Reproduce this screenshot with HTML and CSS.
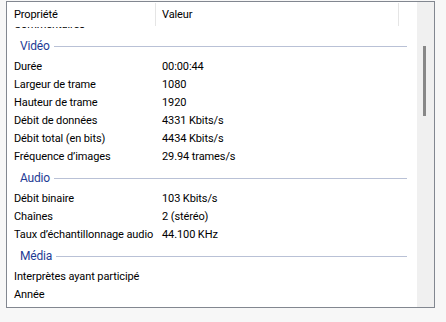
FILE: index.html
```html
<!DOCTYPE html>
<html lang="fr">
<head>
    <meta charset="UTF-8">
    <title>Propriétés - Détails</title>
    <link rel="stylesheet" href="styles.css">
</head>
<body>
    <div class="panel">
        <div class="list">
            <div class="head">
                <div class="head-cell col-name">Propriété</div>
                <div class="head-cell col-value">Valeur</div>
                <div class="head-cell col-rest"></div>
            </div>

            <div class="rows">
                <div class="row clipped"><span class="name">Commentaires</span></div>

                <div class="group"><span>Vidéo</span></div>
                <div class="row"><span class="name">Durée</span><span class="value">00:00:44</span></div>
                <div class="row"><span class="name">Largeur de trame</span><span class="value">1080</span></div>
                <div class="row"><span class="name">Hauteur de trame</span><span class="value">1920</span></div>
                <div class="row"><span class="name">Débit de données</span><span class="value">4331 Kbits/s</span></div>
                <div class="row"><span class="name">Débit total (en bits)</span><span class="value">4434 Kbits/s</span></div>
                <div class="row"><span class="name">Fréquence d’images</span><span class="value">29.94 trames/s</span></div>

                <div class="group"><span>Audio</span></div>
                <div class="row"><span class="name">Débit binaire</span><span class="value">103 Kbits/s</span></div>
                <div class="row"><span class="name">Chaînes</span><span class="value">2 (stéréo)</span></div>
                <div class="row"><span class="name">Taux d’échantillonnage audio</span><span class="value">44.100 KHz</span></div>

                <div class="group"><span>Média</span></div>
                <div class="row"><span class="name">Interprètes ayant participé</span><span class="value"></span></div>
                <div class="row"><span class="name">Année</span><span class="value"></span></div>
            </div>
        </div>

        <div class="scrollbar">
            <div class="thumb"></div>
        </div>
    </div>
</body>
</html>
```

FILE: styles.css
```css
body {
    margin: 0;
    padding: 1px 0 0 6px;
    background-color: #f7f7f7;
    font-family: Roboto, 'Noto Sans', sans-serif;
    font-size: 11px;
    letter-spacing: -0.1px;
    color: #000;
}

.panel {
    width: 429px;
    height: 307px;
    box-sizing: border-box;
    border: 1px solid #828790;
    background-color: #fff;
    display: flex;
}

.list {
    flex: 1;
    overflow: hidden;
}

/* column header */
.head {
    display: flex;
    height: 25px;
    padding-top: 1px;
    box-sizing: border-box;
}

.head-cell {
    height: 23px;
    line-height: 23px;
    border-right: 1px solid #e5e5e5;
    white-space: nowrap;
}

.col-name {
    width: 141px;
    padding-left: 7px;
}

.col-value {
    width: 236px;
    padding-left: 6px;
}

.col-rest {
    flex: 1;
    border-right: none;
}

/* property rows */
.row {
    display: flex;
    height: 18px;
    line-height: 18px;
    white-space: nowrap;
}

.row.clipped {
    height: 7px;
    align-items: flex-end;
    overflow: hidden;
}

.row.clipped .name {
    height: 18px;
}

.name {
    width: 142px;
    padding-left: 7px;
    flex-shrink: 0;
}

.value {
    padding-left: 6px;
}

.group {
    display: flex;
    align-items: center;
    height: 24px;
    padding-left: 13px;
    padding-right: 10px;
    color: #1e3b94;
    font-size: 12px;
    letter-spacing: -0.2px;
}

.group::after {
    content: '';
    flex: 1;
    height: 1px;
    margin-left: 4px;
    background-color: #b9c1d6;
}

/* thin scrollbar */
.scrollbar {
    width: 17px;
    box-sizing: border-box;
    padding: 44px 0 0 6px;
    background-color: #f0f0f0;
}

.thumb {
    width: 3px;
    height: 70px;
    background-color: #888;
}
```
